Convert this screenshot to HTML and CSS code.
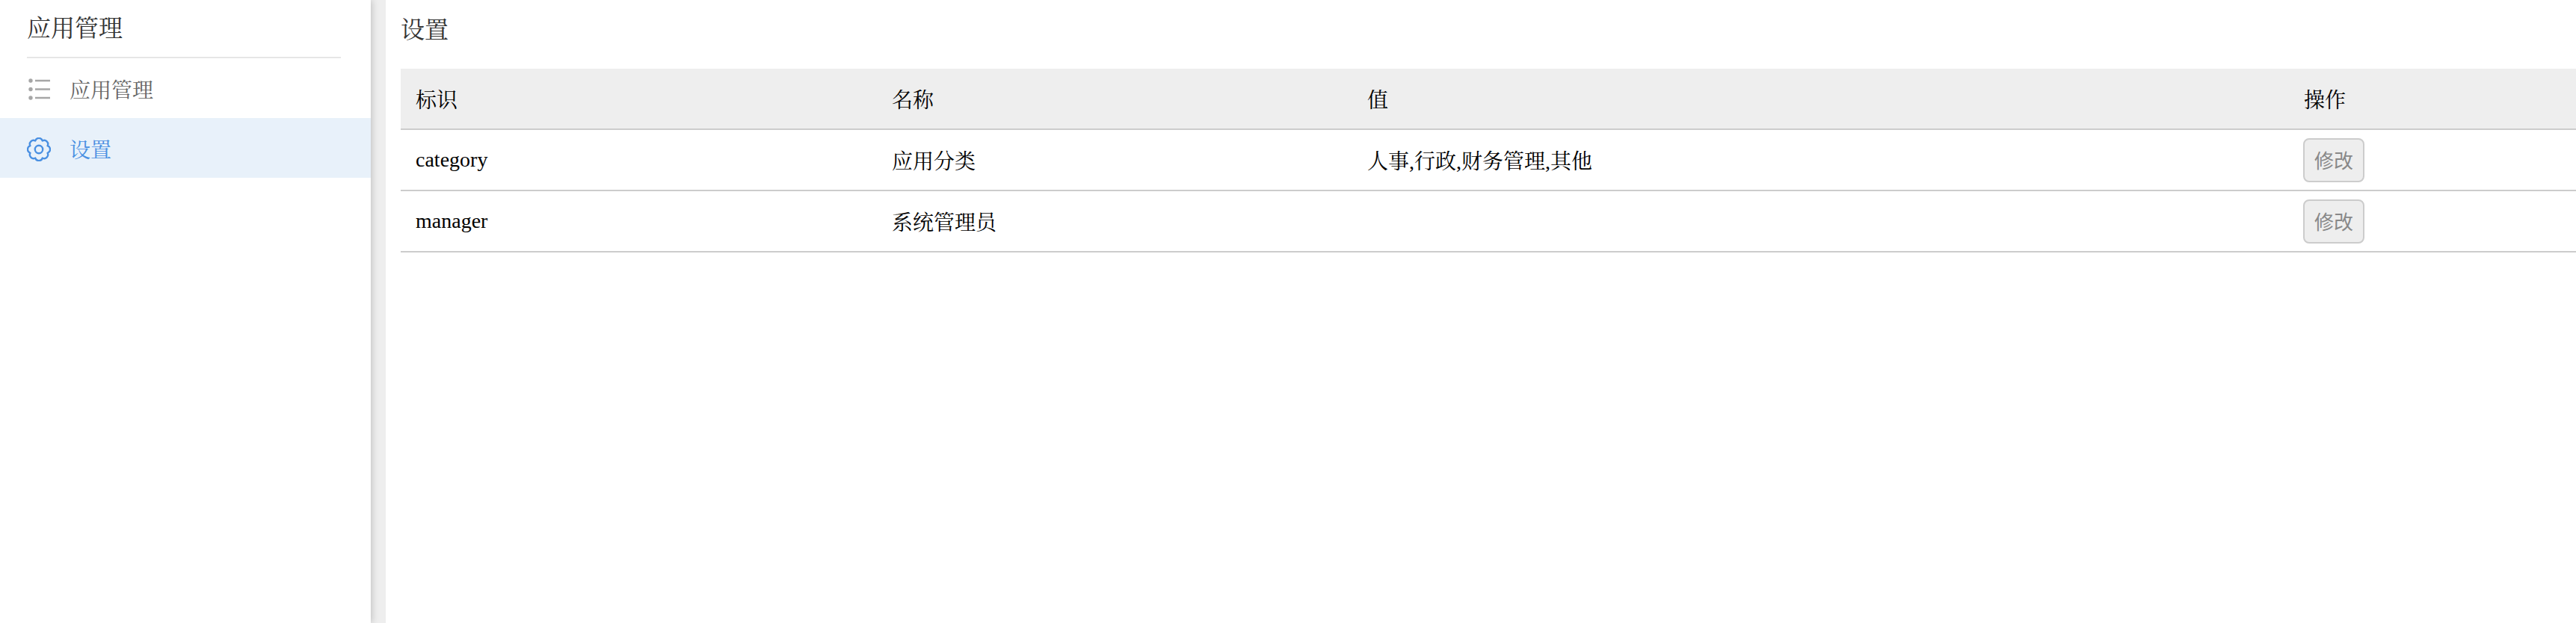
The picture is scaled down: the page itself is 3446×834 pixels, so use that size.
FILE: index.html
```html
<!DOCTYPE html>
<html lang="zh-CN">
<head>
    <meta charset="UTF-8">
    <title>应用管理</title>
    <link rel="stylesheet" href="styles.css">
</head>
<body>
    <aside class="sidebar">
        <div class="sidebar-title">应用管理</div>
        <nav>
            <a href="#" class="nav-item">
                <svg class="nav-icon" viewBox="0 0 32 32" fill="none" stroke="currentColor" stroke-width="2.6">
                    <circle cx="5" cy="4" r="2.7" fill="currentColor" stroke="none"/>
                    <circle cx="5" cy="15.5" r="2.7" fill="currentColor" stroke="none"/>
                    <circle cx="5" cy="27" r="2.7" fill="currentColor" stroke="none"/>
                    <path d="M11 4h20M11 15.500h20M11 27h20"/>
                </svg>
                应用管理
            </a>
            <a href="#" class="nav-item active">
                <svg class="nav-icon" viewBox="0 0 32 32" fill="none" stroke="currentColor" stroke-width="2.4" stroke-linejoin="round">
                    <circle cx="16" cy="16" r="5.2"/>
                    <path d="M11.220 4.450A5 5 0 0 1 20.780 4.450A5 5 0 0 1 27.550 11.220A5 5 0 0 1 27.550 20.780A5 5 0 0 1 20.780 27.550A5 5 0 0 1 11.220 27.550A5 5 0 0 1 4.450 20.780A5 5 0 0 1 4.450 11.220A5 5 0 0 1 11.220 4.450z"/>
                </svg>
                设置
            </a>
        </nav>
    </aside>

    <main class="content">
        <h1 class="page-title">设置</h1>
        <table class="settings-table">
            <thead>
                <tr>
                    <th class="col-key">标识</th>
                    <th class="col-name">名称</th>
                    <th class="col-value">值</th>
                    <th>操作</th>
                </tr>
            </thead>
            <tbody>
                <tr>
                    <td>category</td>
                    <td>应用分类</td>
                    <td>人事,行政,财务管理,其他</td>
                    <td><button class="btn">修改</button></td>
                </tr>
                <tr>
                    <td>manager</td>
                    <td>系统管理员</td>
                    <td></td>
                    <td><button class="btn">修改</button></td>
                </tr>
            </tbody>
        </table>
    </main>
</body>
</html>
```

FILE: styles.css
```css
* {
    margin: 0;
    padding: 0;
    box-sizing: border-box;
}

html, body {
    height: 100%;
}

body {
    display: flex;
    font-family: "Liberation Serif", "Noto Serif CJK SC", "Noto Sans CJK SC", serif;
    color: #000;
    background: #fff;
    overflow: hidden;
}

.sidebar {
    width: 496px;
    flex-shrink: 0;
    background: #fff;
    box-shadow: 0 0 10px rgba(0,0,0,0.25);
    position: relative;
}

.sidebar-title {
    margin: 0 40px 0 36px;
    height: 78px;
    padding-top: 18px;
    font-size: 32px;
    line-height: 40px;
    color: #333;
    border-bottom: 2px solid #e6e6e6;
}

.nav-item {
    display: flex;
    align-items: center;
    height: 80px;
    padding-top: 2px;
    padding-left: 36px;
    font-size: 28px;
    color: #666;
    text-decoration: none;
}

.nav-item.active {
    background: #e8f1fa;
    color: #4a90e2;
}

.nav-icon {
    width: 32px;
    height: 32px;
    margin-top: 1px;
    margin-right: 25px;
}

.nav-item:first-child .nav-icon {
    color: #a6a6a6;
}

.content {
    flex: 1;
    margin-left: 20px;
    padding-left: 20px;
    background: #fff;
    box-shadow: -20px 0 0 #eee;
}

.page-title {
    height: 92px;
    padding-top: 20px;
    font-size: 32px;
    line-height: 40px;
    font-weight: normal;
    color: #333;
}

.settings-table {
    width: 100%;
    table-layout: fixed;
    border-collapse: separate;
    border-spacing: 0;
    font-size: 28px;
}

.settings-table th,
.settings-table td {
    height: 82px;
    padding: 0 20px;
    text-align: left;
    font-weight: normal;
    border-bottom: 2px solid #ccc;
}

.settings-table th {
    background: #eee;
}

.col-key {
    width: 637px;
}

.col-name {
    width: 636px;
}

.col-value {
    width: 1253px;
}

.btn {
    display: block;
    width: 82px;
    height: 59px;
    margin-left: -1px;
    border: 2px solid #ccc;
    border-radius: 8px;
    background: #eee;
    color: #888;
    font-family: "Noto Sans CJK SC", sans-serif;
    font-size: 26px;
    line-height: 1;
}
```
